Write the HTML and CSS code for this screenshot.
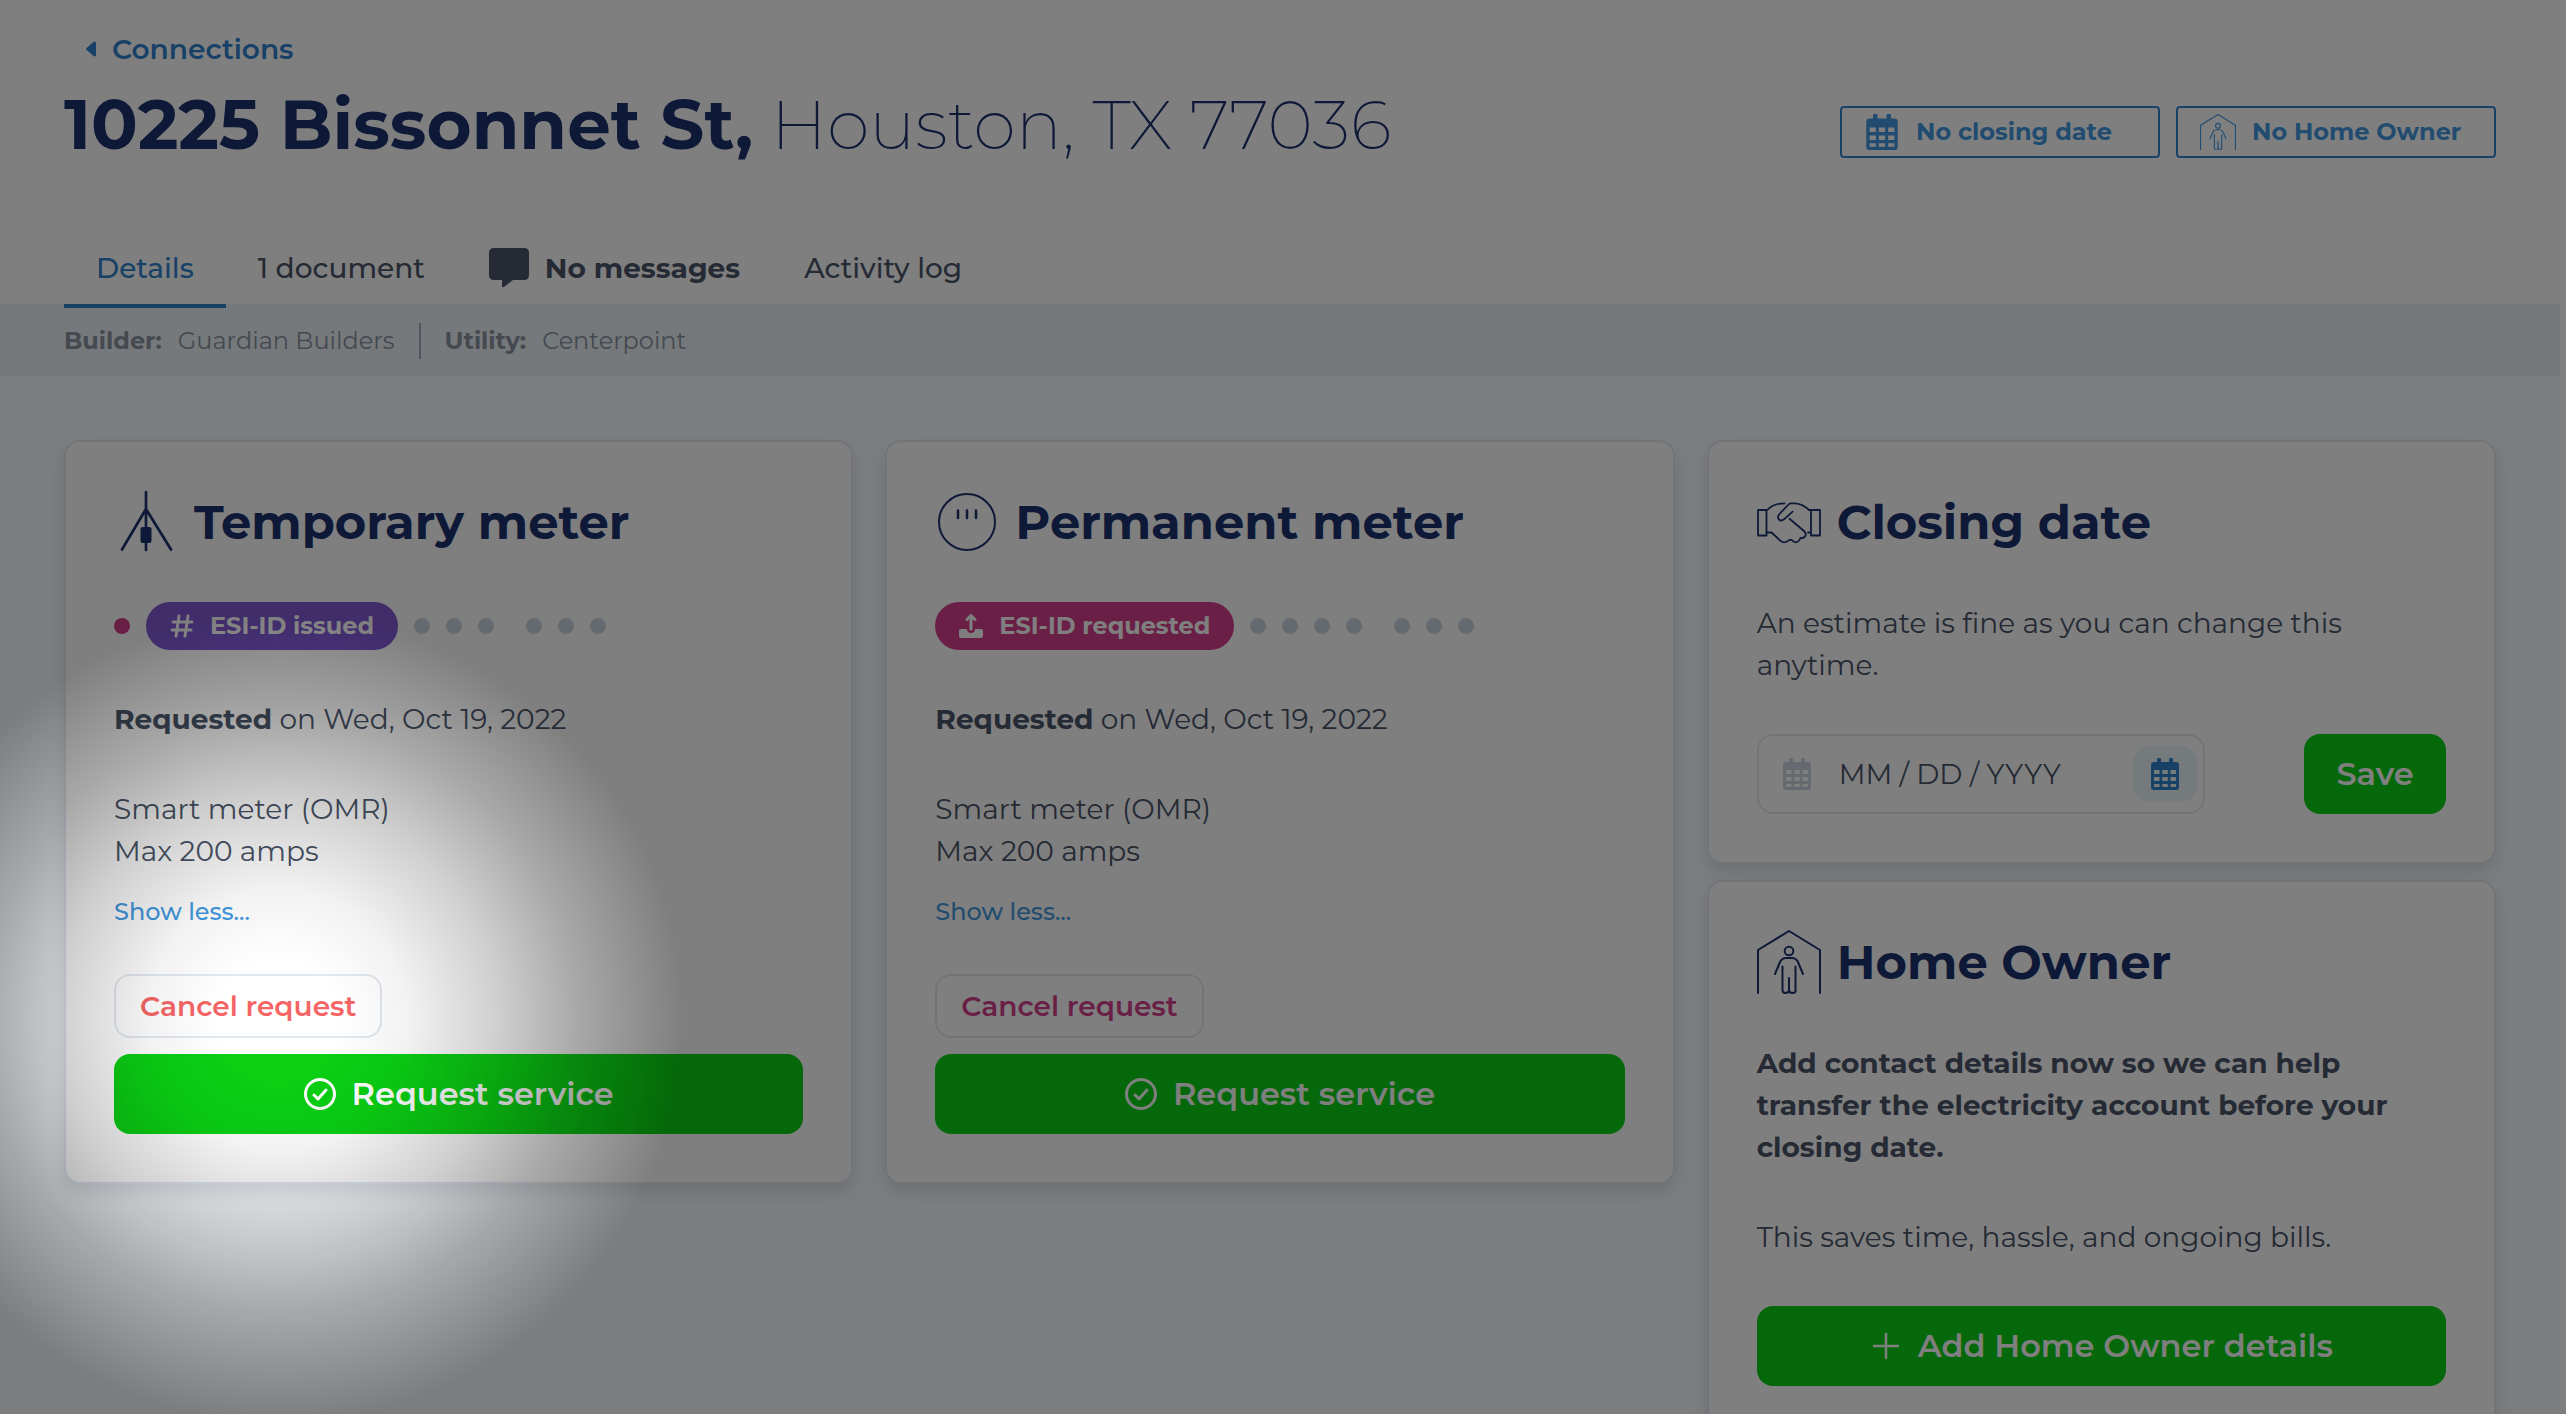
FILE: index.html
```html
<!DOCTYPE html>
<html lang="en">
<head>
<meta charset="utf-8">
<title>10225 Bissonnet St – Connections</title>
<link rel="stylesheet" href="styles.css">
</head>
<body>
<svg class="sprite" aria-hidden="true">
  <symbol id="calendar" viewBox="0 0 448 512"><path fill="currentColor" fill-rule="evenodd" d="M0 192V112q0-48 48-48h48V16q0-16 16-16h32q16 0 16 16v48h128V16q0-16 16-16h32q16 0 16 16v48h48q48 0 48 48v352q0 48-48 48H48q-48 0-48-48zM48 192v64h88v-64zM180 192v64h88v-64zM312 192v64h88v-64zM48 304v64h88v-64zM180 304v64h88v-64zM312 304v64h88v-64zM48 416v48h88v-48zM180 416v48h88v-48zM312 416v48h88v-48z"/></symbol>
  <symbol id="owner" viewBox="0 0 64 64"><g fill="none" stroke="currentColor" stroke-width="2" stroke-linecap="round" stroke-linejoin="round"><path d="M1 63V20L32 1l31 19v43"/><circle cx="32" cy="21" r="4.300"/><path d="M18 44l5-12q2-4 6-4h6q4 0 6 4l5 12M25.500 36.500V60q0 3 3 3t3.500-3V48v12q0 3 3.500 3t3-3V36.500"/></g></symbol>
  <symbol id="check" viewBox="0 0 32 32"><g fill="none" stroke="currentColor" stroke-width="3" stroke-linecap="round" stroke-linejoin="round"><circle cx="16" cy="16" r="14.500"/><path d="M10 17l4 4 8-9"/></g></symbol>
</svg>

<div class="page">
  <header class="header">
    <a class="back" href="#"><svg class="caret" viewBox="0 0 10 16"><path fill="currentColor" d="M10 1.500v13q-1 1.500-2.500.5L.5 9q-1-1 0-2l7-6q1.500-1 2.500.5z"/></svg>Connections</a>
    <div class="heading">
      <h1 class="address"><strong>10225 Bissonnet St,</strong> Houston, TX 77036</h1>
      <div class="actions">
        <button class="chip" type="button"><svg class="chip-icon"><use href="#calendar"/></svg>No closing date</button>
        <button class="chip" type="button"><svg class="chip-icon"><use href="#owner"/></svg>No Home Owner</button>
      </div>
    </div>
    <nav class="tabs">
      <a class="tab active" href="#">Details</a>
      <a class="tab" href="#">1 document</a>
      <a class="tab strong" href="#"><svg class="bubble" viewBox="0 0 40 40"><path fill="currentColor" d="M5 0h30q5 0 5 5v22q0 5-5 5H24l-9 7q-2 1-2-1v-6H5q-5 0-5-5V5q0-5 5-5z"/></svg>No messages</a>
      <a class="tab" href="#">Activity log</a>
    </nav>
  </header>

  <dl class="meta">
    <div class="meta-item"><dt>Builder:</dt><dd>Guardian Builders</dd></div>
    <div class="meta-item"><dt>Utility:</dt><dd>Centerpoint</dd></div>
  </dl>

  <main class="columns">
    <section class="card">
      <h2 class="card-title"><svg class="title-icon" viewBox="0 0 64 64"><g fill="none" stroke="currentColor" stroke-width="2.700" stroke-linecap="round"><path d="M32 2v58M32 19L8 59.500M32 19l25 40.500"/></g><rect x="26.500" y="37" width="11" height="16" rx="2" fill="currentColor"/></svg>Temporary meter</h2>
      <div class="steps">
        <i class="dot done"></i>
        <span class="pill issued"><svg class="pill-icon" viewBox="0 0 24 24"><path fill="none" stroke="currentColor" stroke-width="3" stroke-linecap="round" d="M9 2L6 22M18 2l-3 20M3 8h19M2 16h19"/></svg>ESI-ID issued</span>
        <i class="dot"></i><i class="dot"></i><i class="dot"></i>
        <i class="dot split"></i><i class="dot"></i><i class="dot"></i>
      </div>
      <p class="text requested"><strong>Requested</strong> on Wed, Oct 19, 2022</p>
      <p class="text">Smart meter (OMR)<br>Max 200 amps</p>
      <a class="less" href="#">Show less...</a>
      <button class="cancel current" type="button">Cancel request</button>
      <button class="primary" type="button"><svg class="button-icon"><use href="#check"/></svg>Request service</button>
    </section>

    <section class="card">
      <h2 class="card-title"><svg class="title-icon" viewBox="0 0 64 64"><g fill="none" stroke="currentColor" stroke-width="2"><circle cx="32" cy="32" r="28"/><path stroke-width="2.500" stroke-linecap="round" d="M23 20.500v7.500M32 20.500v7.500M41 20.500v7.500"/></g></svg>Permanent meter</h2>
      <div class="steps">
        <span class="pill"><svg class="pill-icon" viewBox="0 0 24 24"><path fill="none" stroke="currentColor" stroke-width="3" stroke-linecap="round" stroke-linejoin="round" d="M12 15V2M8 5.500L12 1.500l4 4"/><path fill="currentColor" d="M2 15h6q0 4 4 4t4-4h6q2 0 2 2v5q0 2-2 2H2q-2 0-2-2v-5q0-2 2-2z"/></svg>ESI-ID requested</span>
        <i class="dot"></i><i class="dot"></i><i class="dot"></i><i class="dot"></i>
        <i class="dot split"></i><i class="dot"></i><i class="dot"></i>
      </div>
      <p class="text requested"><strong>Requested</strong> on Wed, Oct 19, 2022</p>
      <p class="text">Smart meter (OMR)<br>Max 200 amps</p>
      <a class="less" href="#">Show less...</a>
      <button class="cancel" type="button">Cancel request</button>
      <button class="primary" type="button"><svg class="button-icon"><use href="#check"/></svg>Request service</button>
    </section>

    <div class="stack">
      <section class="card">
        <h2 class="card-title"><svg class="title-icon" viewBox="0 0 64 64"><g fill="none" stroke="currentColor" stroke-width="1.800" stroke-linejoin="round" stroke-linecap="round"><path d="M1 20h8.500v25.500H1zM54 20h9v25.500h-9z"/><path d="M9.500 20q1.500 0 3-2 5-4.500 15-4.700M54 20h-2q-6-6-14-6.700h-4q-1.500 0-3 1.700l-9 9.500q-2 3 0 5t5-.2l8.600-7.600M32.500 28.700L47 41q3 3 1 5.500-2 2-4.500 1.500-1.500 4-5 4.300-2 0-4-2.500h-2q-2 2.500-5 2.500-2.500 0-4-1.500l-9-8.300H9.500M51 42.500h3"/></g></svg>Closing date</h2>
        <p class="text lead">An estimate is fine as you can change this anytime.</p>
        <form class="date-form">
          <label class="date-field">
            <svg class="cal"><use href="#calendar"/></svg>
            <input class="date-input" type="text" aria-label="Closing date" placeholder="MM / DD / YYYY">
            <button class="picker" type="button" aria-label="Open calendar"><svg class="cal"><use href="#calendar"/></svg></button>
          </label>
          <button class="primary save" type="button">Save</button>
        </form>
      </section>
      <section class="card">
        <h2 class="card-title"><svg class="title-icon"><use href="#owner"/></svg>Home Owner</h2>
        <p class="text lead"><strong>Add contact details now so we can help transfer the electricity account before your closing date.</strong></p>
        <p class="text note">This saves time, hassle, and ongoing bills.</p>
        <button class="primary" type="button"><svg class="button-icon plus" viewBox="0 0 32 32"><path fill="none" stroke="currentColor" stroke-width="2.500" stroke-linecap="round" d="M16 4v24M4 16h24"/></svg>Add Home Owner details</button>
      </section>
    </div>
  </main>
</div>
<div class="spotlight"></div>
</body>
</html>
```
FILE: styles.css
```css
:root {
  --blue: #3182ce;
  --sky: #4299e1;
  --navy: #1c3370;
  --ink: #4a5568;
  --line: #e2e8f0;
}
* { box-sizing: border-box; margin: 0; }
body {
  padding-right: 6px;
  background: #fff;
  color: var(--ink);
  font-family: Montserrat, Inter, sans-serif;
  font-size: 28px;
  line-height: 42px;
  height: 100vh;
  overflow: hidden;
}
a { color: inherit; text-decoration: none; }
button, input { font: inherit; color: inherit; }
button { padding: 0; border: 0; background: none; cursor: pointer; }
svg { flex: none; overflow: visible; }
.sprite { position: absolute; width: 0; height: 0; }
.page { background: #f7fafc; min-height: 100vh; }

.header { background: #fff; padding: 28px 64px 0; }
.back {
  display: flex;
  align-items: center;
  gap: 16px;
  width: max-content;
  padding-left: 22px;
  color: var(--blue);
  font-weight: 600;
}
.caret { width: 10px; height: 16px; }
.heading { display: flex; align-items: center; justify-content: space-between; height: 108px; }
.address { color: var(--navy); font-size: 69px; line-height: 108px; font-weight: 200; }
.address strong { font-weight: 700; }
.actions { display: flex; gap: 16px; padding-top: 16px; }
.chip {
  display: flex;
  align-items: center;
  gap: 16px;
  width: 320px;
  height: 52px;
  padding: 0 22px;
  border: 2px solid var(--blue);
  border-radius: 4px;
  color: var(--sky);
  font-size: 24px;
  font-weight: 700;
}
.chip-icon { width: 36px; height: 36px; }
.tabs { display: flex; padding-top: 50px; }
.tab {
  display: flex;
  align-items: center;
  gap: 16px;
  height: 80px;
  padding: 0 32px;
  margin-bottom: -4px;
  font-weight: 500;
}
.tab.active { color: var(--blue); border: 0 solid var(--blue); border-width: 4px 0; border-top-color: transparent; }
.tab.strong { font-weight: 700; }
.bubble { width: 40px; height: 40px; }

.meta {
  display: flex;
  align-items: center;
  height: 72px;
  padding: 2px 64px 0;
  background: #eaf2f8;
  color: #8a92a0;
  font-size: 24px;
}
.meta-item { display: flex; align-items: center; gap: 16px; height: 36px; }
.meta-item + .meta-item { margin-left: 24px; padding-left: 24px; border-left: 2px solid #a0aec0; }
.meta dt { font-weight: 700; }
.meta dd { margin: 0; }

.columns {
  display: grid;
  grid-template-columns: repeat(3, minmax(0, 1fr));
  align-items: start;
  gap: 32px;
  padding: 64px;
}
.stack { display: grid; gap: 16px; }
.card {
  display: flex;
  flex-direction: column;
  align-items: flex-start;
  padding: 48px;
  border: 2px solid var(--line);
  border-radius: 16px;
  background: #fff;
  box-shadow: 0 8px 16px rgba(60, 80, 110, .14);
}
.card-title {
  display: flex;
  align-items: center;
  gap: 16px;
  height: 64px;
  color: var(--navy);
  font-size: 48px;
  font-weight: 700;
}
.title-icon { width: 64px; height: 64px; }
.steps { display: flex; align-items: center; gap: 16px; height: 48px; margin-top: 48px; }
.dot { width: 16px; height: 16px; border-radius: 50%; background: #cbd5e0; }
.dot.split { margin-left: 16px; }
.dot.done { background: #d53f8c; }
.pill {
  display: flex;
  align-items: center;
  gap: 16px;
  height: 48px;
  padding: 0 24px;
  border-radius: 24px;
  background: #d53f8c;
  color: #fff;
  font-size: 24px;
  font-weight: 700;
}
.pill.issued { background: #805ad5; }
.pill-icon { width: 24px; height: 24px; }
.requested { margin: 48px 0; }
.less { margin: 20px 0 42px; color: var(--sky); font-size: 24px; line-height: 40px; font-weight: 500; }
.cancel {
  height: 64px;
  padding: 0 24px;
  border: 2px solid var(--line);
  border-radius: 16px;
  color: #d53f8c;
  font-weight: 600;
}
.cancel.current { color: #f56565; }
.primary {
  display: flex;
  align-items: center;
  justify-content: center;
  gap: 16px;
  width: 100%;
  height: 80px;
  margin-top: 16px;
  border-radius: 16px;
  background: #0bd014;
  color: #fff;
  font-size: 32px;
  font-weight: 600;
}
.button-icon { width: 32px; height: 32px; }
.lead { margin-top: 48px; }
.date-form { display: flex; justify-content: space-between; width: 100%; margin-top: 48px; }
.date-field {
  display: flex;
  align-items: center;
  width: 448px;
  height: 80px;
  padding: 0 6px 0 22px;
  border: 2px solid var(--line);
  border-radius: 16px;
  color: #cbd5e0;
}
.cal { width: 32px; height: 32px; }
.date-input { flex: 1; min-width: 0; padding: 0 0 0 26px; border: 0; outline: 0; background: none; }
.date-input::placeholder { color: var(--ink); opacity: 1; }
.picker { display: grid; place-items: center; width: 64px; height: 56px; border-radius: 16px; background: #ebf4fb; color: var(--blue); }
.save { width: 142px; margin: 0; }
.note { margin: 48px 0 32px; }

.spotlight {
  position: fixed;
  inset: 0;
  pointer-events: none;
  background: radial-gradient(circle at 278px 1020px, rgba(0, 0, 0, 0) 60px, rgba(0, 0, 0, .05) 130px, rgba(0, 0, 0, .19) 220px, rgba(0, 0, 0, .34) 300px, rgba(0, 0, 0, .5) 405px);
}
```
